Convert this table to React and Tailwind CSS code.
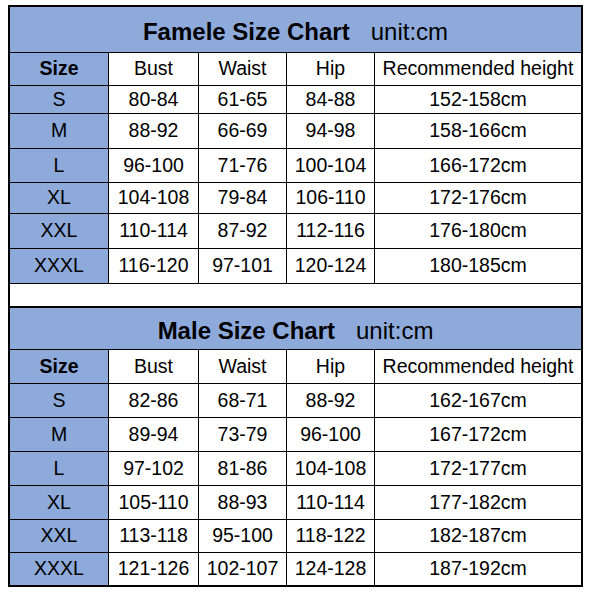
const female = [
  ["S", "80-84", "61-65", "84-88", "152-158cm"],
  ["M", "88-92", "66-69", "94-98", "158-166cm"],
  ["L", "96-100", "71-76", "100-104", "166-172cm"],
  ["XL", "104-108", "79-84", "106-110", "172-176cm"],
  ["XXL", "110-114", "87-92", "112-116", "176-180cm"],
  ["XXXL", "116-120", "97-101", "120-124", "180-185cm"],
];

const male = [
  ["S", "82-86", "68-71", "88-92", "162-167cm"],
  ["M", "89-94", "73-79", "96-100", "167-172cm"],
  ["L", "97-102", "81-86", "104-108", "172-177cm"],
  ["XL", "105-110", "88-93", "110-114", "177-182cm"],
  ["XXL", "113-118", "95-100", "118-122", "182-187cm"],
  ["XXXL", "121-126", "102-107", "124-128", "187-192cm"],
];

const headers = ["Size", "Bust", "Waist", "Hip", "Recommended height"];

// row heights copied from the screenshot, they are not even
const femaleHeights = ["h-[27px]", "h-[34px]", "h-[33px]", "h-[30px]", "h-[34px]", "h-[34px]"];
const maleHeights = ["h-[33px]", "h-[33px]", "h-[33px]", "h-[33px]", "h-[32px]", "h-[32px]"];

function Chart({ title, rows, titleH, headH, rowH }) {
  return (
    <div>
      <div
        className={`${titleH} pt-[4px] bg-[#8eaadb] border-b border-black flex items-center justify-center gap-[21px] text-[24px]`}
      >
        <span className="font-bold">{title}</span>
        <span>unit:cm</span>
      </div>
      <div className="grid grid-cols-[98px_89px_87px_87px_1fr] gap-px bg-black">
        {headers.map((h, i) => (
          <div
            key={h}
            className={`${headH} flex items-center justify-center ${
              i === 0 ? "bg-[#8eaadb] font-bold" : "bg-white"
            }`}
          >
            {h}
          </div>
        ))}
        {rows.map((row, r) =>
          row.map((cell, i) => (
            <div
              key={row[0] + i}
              className={`${rowH[r]} flex items-center justify-center ${
                i === 0 ? "bg-[#8eaadb]" : "bg-white"
              }`}
            >
              {cell}
            </div>
          ))
        )}
      </div>
    </div>
  );
}

export default function App() {
  return (
    <div className="w-[593px] h-[592px] bg-white pt-[5px] pl-[8px] font-['Liberation_Sans',Arial,sans-serif] text-black text-[19.5px] leading-none">
      <div className="w-[575px] border-2 border-black">
        <Chart
          title="Famele Size Chart"
          rows={female}
          titleH="h-[46px]"
          headH="h-[32px]"
          rowH={femaleHeights}
        />
        <div className="h-[25px] bg-white border-t border-b-2 border-black" />
        <Chart
          title="Male Size Chart"
          rows={male}
          titleH="h-[42px]"
          headH="h-[33px]"
          rowH={maleHeights}
        />
      </div>
    </div>
  );
}
